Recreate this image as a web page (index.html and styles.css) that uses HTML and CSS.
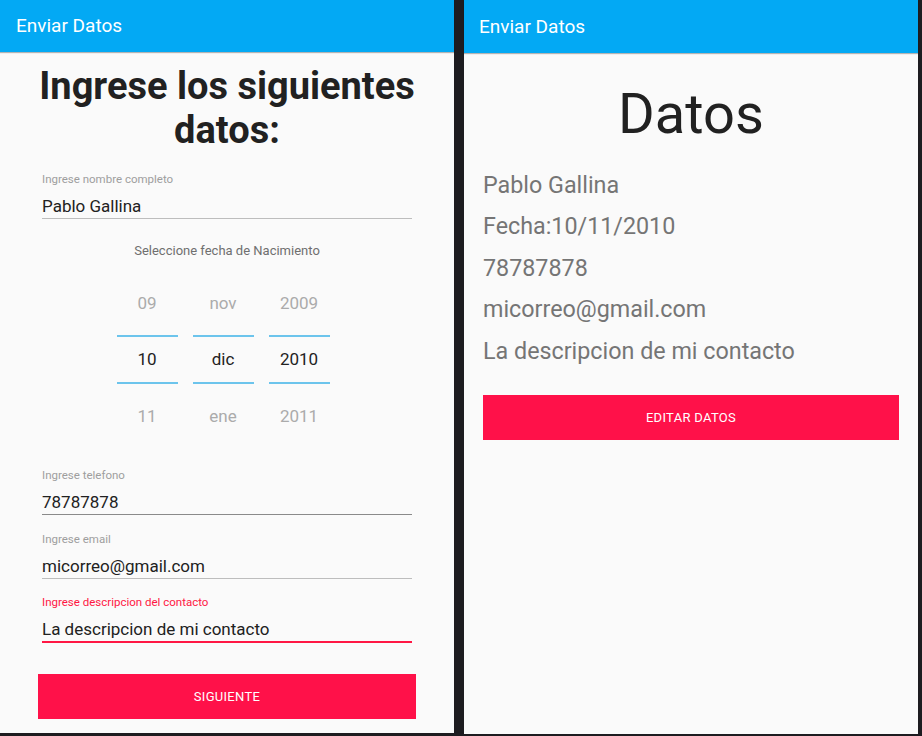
FILE: index.html
```html
<!DOCTYPE html>
<html lang="es">
<head>
<meta charset="utf-8">
<title>Enviar Datos</title>
<link rel="stylesheet" href="styles.css">
</head>
<body>
<div class="stage">
  <section class="phone phone-left">
    <header class="appbar"><span class="appbar-title">Enviar Datos</span></header>
    <main class="form">
      <h1 class="heading">Ingrese los siguientes datos:</h1>

      <div class="field">
        <span class="label">Ingrese nombre completo</span>
        <span class="value">Pablo Gallina</span>
      </div>

      <p class="picker-title">Seleccione fecha de Nacimiento</p>

      <div class="picker">
        <div class="picker-col">
          <span class="pick dim">09</span>
          <span class="pick sel">10</span>
          <span class="pick dim">11</span>
        </div>
        <div class="picker-col">
          <span class="pick dim">nov</span>
          <span class="pick sel">dic</span>
          <span class="pick dim">ene</span>
        </div>
        <div class="picker-col">
          <span class="pick dim">2009</span>
          <span class="pick sel">2010</span>
          <span class="pick dim">2011</span>
        </div>
      </div>

      <div class="field field-phone">
        <span class="label">Ingrese telefono</span>
        <span class="value value-dark">78787878</span>
      </div>
      <div class="field">
        <span class="label">Ingrese email</span>
        <span class="value">micorreo@gmail.com</span>
      </div>
      <div class="field field-focus">
        <span class="label">Ingrese descripcion del contacto</span>
        <span class="value">La descripcion de mi contacto</span>
      </div>

      <button class="btn btn-left">SIGUIENTE</button>
    </main>
  </section>

  <section class="phone phone-right">
    <header class="appbar appbar-right"><span class="appbar-title">Enviar Datos</span></header>
    <main class="summary">
      <h2 class="big-title">Datos</h2>
      <ul class="items">
        <li>Pablo Gallina</li>
        <li>Fecha:10/11/2010</li>
        <li>78787878</li>
        <li>micorreo@gmail.com</li>
        <li>La descripcion de mi contacto</li>
      </ul>
      <button class="btn btn-right">EDITAR DATOS</button>
    </main>
  </section>
</div>
</body>
</html>
```

FILE: styles.css
```css
* {
  box-sizing: border-box;
}

html, body {
  margin: 0;
  padding: 0;
  width: 922px;
  height: 736px;
  overflow: hidden;
  background: #1d1c20;
  font-family: Roboto, "Noto Sans", sans-serif;
}

.stage {
  display: flex;
  gap: 10px;
  align-items: flex-start;
}

.phone {
  width: 454px;
  background: #fafafa;
  display: flex;
  flex-direction: column;
}

.phone-left {
  height: 733px;
}

.phone-right {
  height: 734px;
}

.appbar {
  height: 52px;
  background: #03a9f4;
  box-shadow: 0 1px 1px rgba(0, 0, 0, 0.28);
  padding-left: 16px;
  display: flex;
  align-items: center;
  position: relative;
  z-index: 1;
}

.appbar-right {
  height: 53px;
  padding-left: 15px;
}

.appbar-title {
  color: #ffffff;
  font-size: 19px;
  line-height: 52px;
}

/* ---------- left form ---------- */
.form {
  padding: 12px 42px 0;
  display: flex;
  flex-direction: column;
}

.heading {
  margin: 0 -14px;
  text-align: center;
  font-size: 38px;
  line-height: 44px;
  font-weight: 700;
  color: #212121;
}

.field {
  display: flex;
  flex-direction: column;
  margin-top: 20px;
}

.label {
  font-size: 11.5px;
  line-height: 14px;
  color: #9e9e9e;
}

.value {
  margin-top: 10px;
  font-size: 17px;
  line-height: 20px;
  color: #212121;
  padding-bottom: 2px;
  border-bottom: 1.5px solid #bdbdbd;
}

.value-dark {
  border-bottom-color: #8a8a8a;
}

.field-phone {
  margin-top: 24px;
}

.field-phone + .field,
.field + .field-focus {
  margin-top: 16.5px;
}

.field-focus .label {
  color: #ff1744;
}

.field-focus .value {
  border-bottom: 2px solid #ff1744;
  padding-bottom: 1.5px;
}

.picker-title {
  margin: 23.5px 0 0;
  text-align: center;
  font-size: 13px;
  line-height: 16px;
  color: #6f6f6f;
}

.picker {
  margin: 16px 0 0 -8px;
  display: flex;
  justify-content: center;
  gap: 15px;
}

.picker-col {
  width: 61px;
  display: flex;
  flex-direction: column;
}

.pick {
  height: 56.5px;
  display: flex;
  align-items: center;
  justify-content: center;
  font-size: 17px;
}

.dim {
  color: #ababab;
}

.sel {
  color: #222222;
  height: 49.5px;
  margin: 3.5px 0;
  border-top: 2px solid #6cc4ec;
  border-bottom: 2px solid #6cc4ec;
}

.btn {
  border: none;
  background: #ff1149;
  color: #ffffff;
  font-family: Roboto, "Noto Sans", sans-serif;
  font-size: 13px;
  letter-spacing: 0.3px;
  height: 45px;
  padding: 0;
  cursor: pointer;
}

.btn-left {
  margin: 31px -4px 0;
}

/* ---------- right summary ---------- */
.summary {
  padding: 28px 19px 0;
  display: flex;
  flex-direction: column;
}

.big-title {
  margin: 0;
  text-align: center;
  font-size: 56px;
  line-height: 66px;
  font-weight: 400;
  color: #212121;
}

.items {
  list-style: none;
  margin: 17.5px 0 0;
  padding: 0;
}

.items li {
  font-size: 23.3px;
  line-height: 41.5px;
  color: #757575;
}

.btn-right {
  margin-top: 23px;
}
```
